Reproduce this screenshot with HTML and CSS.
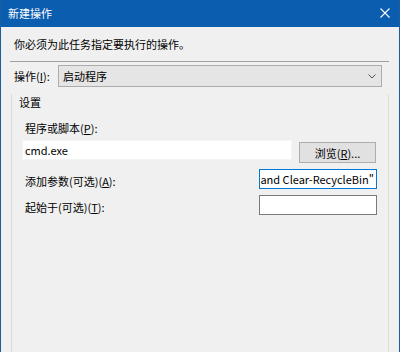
FILE: index.html
```html
<!DOCTYPE html>
<html lang="zh-CN">
<head>
<meta charset="utf-8">
<link rel="stylesheet" href="styles.css">
</head>
<body>
<div class="window">
  <div class="titlebar">
    <span class="title">新建操作</span>
    <svg class="close" width="10" height="10" viewBox="0 0 10 10"><path d="M0.5 0.5L9.5 9.5M9.5 0.5L0.5 9.5" stroke="#fff" stroke-width="1.1" fill="none"/></svg>
  </div>
  <div class="header">你必须为此任务指定要执行的操作。</div>
  <div class="sep"></div>
  <div class="action-row">
    <span class="action-label">操作(<u>I</u>):</span>
    <div class="combo">
      <span>启动程序</span>
      <svg class="chev" width="8" height="5" viewBox="0 0 8 5"><path d="M0.5 0.5L4 4L7.5 0.5" stroke="#555" stroke-width="1" fill="none"/></svg>
    </div>
  </div>
  <div class="group">
    <div class="legend">设置</div>
    <div class="label first">程序或脚本(<u>P</u>):</div>
    <div class="prog-row">
      <div class="input plain">cmd.exe</div>
      <div class="button">浏览(<u>R</u>)...</div>
    </div>
    <div class="field-row args">
      <span class="label">添加参数(可选)(<u>A</u>):</span>
      <div class="input small focused"><span class="scroll">and Clear-RecycleBin"</span></div>
    </div>
    <div class="field-row start">
      <span class="label">起始于(可选)(<u>T</u>):</span>
      <div class="input small"></div>
    </div>
  </div>
</div>
</body>
</html>
```
FILE: styles.css
```css
* { box-sizing: border-box; }
html, body { margin: 0; padding: 0; }
body {
  width: 400px;
  height: 352px;
  overflow: hidden;
  font-family: "Noto Sans CJK SC", "Noto Sans", sans-serif;
  font-size: 11px;
  color: #000;
}
.window {
  width: 400px;
  height: 352px;
  background: #f0f0f0;
  border-left: 1px solid #1b5e9f;
  border-right: 1px solid #1b5e9f;
  display: flex;
  flex-direction: column;
}
.titlebar {
  height: 27px;
  background: #0b5daf;
  color: #fff;
  display: flex;
  align-items: center;
  justify-content: space-between;
  padding: 0 9px 0 7px;
  flex: none;
}
.title { line-height: 16px; margin-top: -1px; }
.close { display: block; margin-top: -1px; }
.header {
  padding: 9px 0 9px 13px;
  line-height: 16px;
  height: 34px;
  flex: none;
}
.sep {
  height: 1px;
  background: #a0a0a0;
  margin: 0 10px 0 9px;
  flex: none;
}
.action-row {
  display: flex;
  align-items: center;
  margin-top: 3px;
  padding-left: 13px;
  height: 22px;
  flex: none;
}
.action-label { width: 44px; line-height: 16px; }
.combo {
  width: 324px;
  height: 22px;
  background: #e5e5e5;
  border: 1px solid #acacac;
  display: flex;
  align-items: center;
  justify-content: space-between;
  padding: 0 5px 0 4px;
  line-height: 16px;
}
.chev { display: block; }
.group {
  margin: 7px 0 0 10px;
  width: 378px;
  flex: 1;
  border-left: 1px solid #e2d6da;
  border-right: 1px solid #eadbcf;
}
.legend {
  padding-left: 7px;
  line-height: 16px;
  height: 16px;
}
.label { line-height: 16px; }
.label.first { margin: 10px 0 0 13px; }
.prog-row {
  display: flex;
  align-items: flex-start;
  margin-top: 4px;
  padding-left: 10px;
}
.input {
  background: #fff;
  height: 20px;
  line-height: 18px;
  padding: 0 2px;
  white-space: nowrap;
}
.input.plain {
  width: 270px;
  border: 1px solid #f4f4f4;
}
.button {
  margin: 2px 0 0 7px;
  width: 77px;
  height: 21px;
  background: #e1e1e1;
  border: 1px solid #adadad;
  display: flex;
  align-items: center;
  justify-content: center;
  line-height: 16px;
}
.field-row {
  display: flex;
  align-items: flex-start;
  justify-content: space-between;
  padding: 0 11px 0 13px;
}
.field-row .label { margin-top: 4px; }
.field-row.args { margin-top: 6px; }
.field-row.start { margin-top: 6px; }
.input.small {
  width: 118px;
  border: 1px solid #7a7a7a;
}
.input.focused {
  border-color: #0078d7;
  display: flex;
  justify-content: flex-end;
  font-size: 11px;
}
.scroll { flex: none; }
u { text-decoration: underline; text-underline-offset: 1px; }
```
